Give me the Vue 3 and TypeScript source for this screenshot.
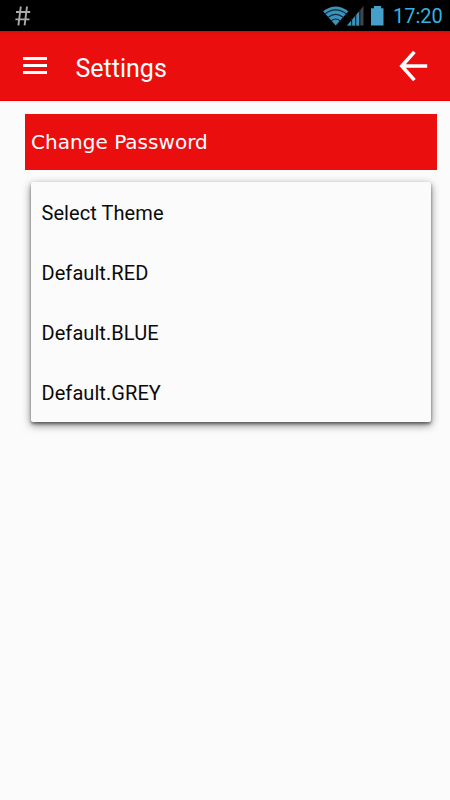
<script setup lang="ts">
import { ref } from 'vue'

const themes: string[] = ['Select Theme', 'Default.RED', 'Default.BLUE', 'Default.GREY']
const selected = ref<string>(themes[0])
</script>

<template>
  <div class="screen">
    <div class="status">
      <span class="hash">
        <svg width="16" height="20" viewBox="0 0 16 20" fill="none" stroke="#aaa" stroke-width="1.9">
          <path d="M5.8 0.5L3.4 19.3M12 0.5L9.6 19.3M1 6H15.2M.4 13.4H14.5" />
        </svg>
      </span>
      <svg class="wifi" width="26" height="20" viewBox="0 0 26 20">
        <path d="M0 5.3Q12.6 -4.2 25.4 5.3L12.7 19.6Z" fill="#3b93bc" />
        <path d="M1.8 8Q12.7 -.2 23.6 8M4.9 11.5Q12.7 5.3 20.5 11.5M8 15Q12.7 11 17.4 15" fill="none" stroke="#0b2c3b" stroke-width="1.1" />
      </svg>
      <svg class="signal" width="17" height="20" viewBox="0 0 17 20">
        <path d="M0 19.5L16.5 0V19.5Z" fill="#444" />
        <path d="M0 19.5L12.5 5.2V19.5Z" fill="#3b93bc" />
        <path d="M4.6 12V20M8.7 8V20M12.8 3V20" stroke="#061b25" stroke-width="1.1" />
      </svg>
      <svg class="battery" width="13" height="20" viewBox="0 0 13 20">
        <path d="M3 0H10V2.2H12.5V19.5H0V2.2H3Z" fill="#459fc8" />
      </svg>
      <span class="clock">17:20</span>
    </div>
    <header class="bar">
      <svg class="menu" width="24" height="18" viewBox="0 0 24 18" fill="#fff">
        <path d="M0 0H24V3H0ZM0 7H24V10H0ZM0 14H24V17H0Z" />
      </svg>
      <h1 class="title">Settings</h1>
      <svg class="back" width="29" height="32" viewBox="0 0 29 32" fill="none" stroke="#fff" stroke-width="3.6">
        <path d="M15.4 1.9L2.8 16L15.4 30.1M2.8 16H28.2" />
      </svg>
    </header>
    <main class="content">
      <button class="change">Change Password</button>
      <ul class="dropdown">
        <li v-for="theme in themes" :key="theme" class="option" @click="selected = theme">{{ theme }}</li>
      </ul>
    </main>
  </div>
</template>

<style>
body {
  background: #fbfbfb;
}
</style>

<style scoped>
.screen {
  width: 450px;
  height: 800px;
  background: #fbfbfb;
  font-family: Roboto, sans-serif;
  overflow: hidden;
}
.status {
  display: flex;
  align-items: flex-start;
  height: 31px;
  padding: 6px 7px 0 15px;
  box-sizing: border-box;
  background: #000;
}
.hash {
  flex: 1;
}
.signal {
  margin-left: -2px;
}
.battery {
  margin-left: 7px;
}
.clock {
  width: 50px;
  margin-left: 9px;
  font-size: 20px;
  line-height: 21px;
  color: #36b1e0;
  white-space: nowrap;
}
.bar {
  display: flex;
  align-items: center;
  height: 70px;
  padding: 0 22px 0 23px;
  box-sizing: border-box;
  background: linear-gradient(#d40d0d, #eb0e0e 4px, #eb0e0e 69px, #f00000 69px);
}
.title {
  flex: 1;
  margin: 5px 0 0 28.5px;
  font-size: 25px;
  font-weight: 400;
  line-height: 30px;
  color: #fff;
}
.content {
  padding: 13px 13px 0 25px;
}
.change {
  display: block;
  width: 412px;
  height: 56px;
  padding: 0 6px;
  border: 0;
  background: #eb0e0e;
  color: #fff;
  font-family: "DejaVu Sans", sans-serif;
  font-size: 20px;
  letter-spacing: 0.03px;
  text-align: left;
}
.dropdown {
  width: 400px;
  height: 240px;
  margin: 12px 0 0 6px;
  padding: 0;
  list-style: none;
  border-radius: 2px;
  background: #fbfbfb;
  box-shadow: 0 3px 8px rgba(0, 0, 0, 0.5), 0 2px 3px rgba(0, 0, 0, 0.4);
}
.option {
  height: 60px;
  padding: 1px 10.5px 0;
  box-sizing: border-box;
  font-size: 20px;
  letter-spacing: 0.07px;
  line-height: 60px;
  color: #0a0a0a;
}
</style>
